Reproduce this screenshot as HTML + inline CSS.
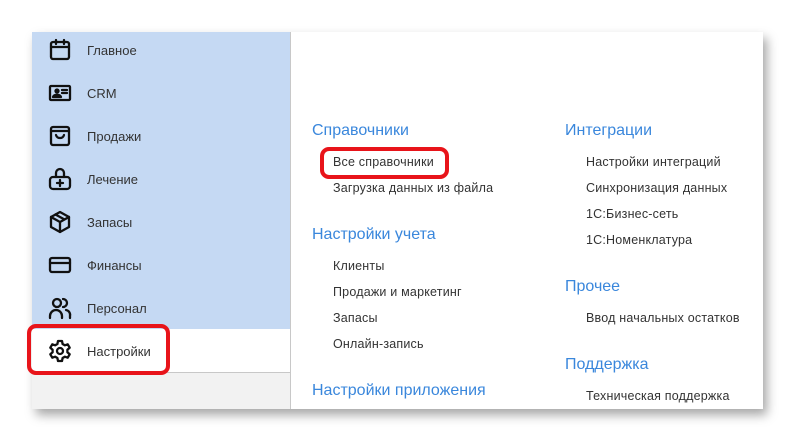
<!DOCTYPE html>
<html><head><meta charset="utf-8"><style>
body{margin:0;width:795px;height:442px;background:#fff;position:relative;overflow:hidden;font-family:"Liberation Sans",Arial,sans-serif}
.panel{position:absolute;left:32px;top:32px;width:731px;height:377px;background:#fff;box-shadow:4px 6px 10px rgba(0,0,0,.35)}
.side{position:absolute;left:0;top:0;width:258px;height:377px;background:#f2f2f2;border-right:1px solid #c8c8c8}
.blue{position:absolute;left:0;top:0;width:258px;height:297px;background:#c5d9f3}
.white{position:absolute;left:0;top:297px;width:258px;height:43px;background:#fff;border-bottom:1px solid #c8c8c8}
.it{position:absolute;left:55px;font-size:13px;color:#333}
svg.ic{position:absolute;left:16px;width:24px;height:24px;fill:none;stroke:#111;stroke-width:2.3;stroke-linejoin:round;stroke-linecap:round}
.h{position:absolute;font-size:16px;color:#3a87dc}
.l{position:absolute;font-size:12.5px;color:#333;letter-spacing:0.2px}
.red{position:absolute;border:4px solid #e8141a;border-radius:9px}
</style></head><body>
<div class="panel">
<div class="side"><div class="blue"></div><div class="white"></div>
<svg class="ic" style="top:6px" viewBox="0 0 24 24"><rect x="3" y="4" width="18" height="17" rx="2"/><path d="M3 9h18M8 2v4M16 2v4"/></svg><div class="it" style="top:11px">Главное</div>
<svg class="ic" style="top:49px" viewBox="0 0 24 24"><rect x="2" y="5" width="20" height="14" rx="1"/><circle cx="9" cy="10" r="1.5" fill="#111"/><path d="M5 16c1-3 7-3 8 0z" fill="#111"/><path d="M14 9h5M14 12h5"/></svg><div class="it" style="top:54px">CRM</div>
<svg class="ic" style="top:92px" viewBox="0 0 24 24"><rect x="3" y="3" width="18" height="18" rx="2"/><path d="M3 7h18M8 11c1 4 7 4 8 0"/></svg><div class="it" style="top:97px">Продажи</div>
<svg class="ic" style="top:135px" viewBox="0 0 24 24"><path d="M8 10V6a4 4 0 0 1 8 0v4"/><rect x="2" y="10" width="20" height="12" rx="3"/><path d="M12 13v6M9 16h6"/></svg><div class="it" style="top:140px">Лечение</div>
<svg class="ic" style="top:178px" viewBox="0 0 24 24"><path d="M12 2l9 5v10l-9 5-9-5V7z"/><path d="M3 7l9 5 9-5M12 12v10M7.5 4.5l9 5"/></svg><div class="it" style="top:183px">Запасы</div>
<svg class="ic" style="top:221px" viewBox="0 0 24 24"><rect x="2" y="5" width="20" height="14" rx="2"/><path d="M2 10h20"/></svg><div class="it" style="top:226px">Финансы</div>
<svg class="ic" style="top:264px" viewBox="0 0 24 24"><circle cx="9" cy="7" r="4"/><path d="M2 22v-2a6 6 0 0 1 12 0v2M15 3a4 4 0 0 1 0 8M18 14a5 5 0 0 1 4 6v2"/></svg><div class="it" style="top:269px">Персонал</div>
<svg class="ic" style="top:307px" viewBox="0 0 24 24"><circle cx="12" cy="12" r="3"/><path d="M10 2h4l.6 3 2.2 1.3 2.9-1 2 3.4-2.3 2v2.6l2.3 2-2 3.4-2.9-1-2.2 1.3-.6 3h-4l-.6-3-2.2-1.3-2.9 1-2-3.4 2.3-2v-2.6l-2.3-2 2-3.4 2.9 1L9.4 5z"/></svg><div class="it" style="top:312px">Настройки</div>
</div>
<div class="h" style="left:280px;top:90px">Справочники</div>
<div class="l" style="left:301px;top:123px">Все справочники</div>
<div class="l" style="left:301px;top:149px">Загрузка данных из файла</div>
<div class="h" style="left:280px;top:194px">Настройки учета</div>
<div class="l" style="left:301px;top:227px">Клиенты</div>
<div class="l" style="left:301px;top:253px">Продажи и маркетинг</div>
<div class="l" style="left:301px;top:279px">Запасы</div>
<div class="l" style="left:301px;top:305px">Онлайн-запись</div>
<div class="h" style="left:280px;top:350px">Настройки приложения</div>
<div class="h" style="left:533px;top:90px">Интеграции</div>
<div class="l" style="left:554px;top:123px">Настройки интеграций</div>
<div class="l" style="left:554px;top:149px">Синхронизация данных</div>
<div class="l" style="left:554px;top:175px">1С:Бизнес-сеть</div>
<div class="l" style="left:554px;top:201px">1С:Номенклатура</div>
<div class="h" style="left:533px;top:246px">Прочее</div>
<div class="l" style="left:554px;top:279px">Ввод начальных остатков</div>
<div class="h" style="left:533px;top:324px">Поддержка</div>
<div class="l" style="left:554px;top:357px">Техническая поддержка</div>
</div>
<div class="red" style="left:27px;top:324px;width:135px;height:43px"></div>
<div class="red" style="left:320px;top:147px;width:121px;height:24px"></div>
</body></html>
